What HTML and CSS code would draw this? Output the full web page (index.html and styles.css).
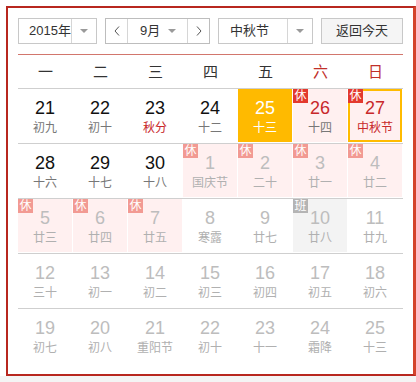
FILE: index.html
```html
<!DOCTYPE html>
<html lang="zh">
<head>
<meta charset="utf-8">
<title>万年历</title>
<link rel="stylesheet" href="styles.css">
</head>
<body>
<div class="cal">
  <div class="toolbar">
    <div class="select year"><span class="val">2015年</span><span class="arr"><i class="tri"></i></span></div>
    <div class="mgroup">
      <span class="nav"><svg width="6" height="10" viewBox="0 0 6 10"><polyline points="5,0.5 1,5 5,9.5" fill="none" stroke="#555" stroke-width="1"/></svg></span>
      <div class="mval"><span class="val">9月</span><i class="tri"></i></div>
      <span class="nav"><svg width="6" height="10" viewBox="0 0 6 10"><polyline points="1,0.5 5,5 1,9.5" fill="none" stroke="#555" stroke-width="1"/></svg></span>
    </div>
    <div class="select holiday"><span class="val">中秋节</span><span class="arr"><i class="tri"></i></span></div>
    <div class="today-btn">返回今天</div>
  </div>
  <div class="weekdays">
    <span>一</span><span>二</span><span>三</span><span>四</span><span>五</span><span class="we">六</span><span class="we">日</span>
  </div>
  <div class="rows">
    <div class="row">
      <div class="cell"><div class="day"><b>21</b><em>初九</em></div></div>
      <div class="cell"><div class="day"><b>22</b><em>初十</em></div></div>
      <div class="cell"><div class="day"><b>23</b><em class="red">秋分</em></div></div>
      <div class="cell"><div class="day"><b>24</b><em>十二</em></div></div>
      <div class="cell"><div class="day today"><b>25</b><em>十三</em></div></div>
      <div class="cell"><div class="day rest"><span class="badge">休</span><b class="red">26</b><em>十四</em></div></div>
      <div class="cell"><div class="day rest sel"><span class="badge">休</span><b class="red">27</b><em class="red">中秋节</em></div></div>
    </div>
    <div class="row">
      <div class="cell"><div class="day"><b>28</b><em>十六</em></div></div>
      <div class="cell"><div class="day"><b>29</b><em>十七</em></div></div>
      <div class="cell"><div class="day"><b>30</b><em>十八</em></div></div>
      <div class="cell"><div class="day other rest"><span class="badge">休</span><b>1</b><em>国庆节</em></div></div>
      <div class="cell"><div class="day other rest"><span class="badge">休</span><b>2</b><em>二十</em></div></div>
      <div class="cell"><div class="day other rest"><span class="badge">休</span><b>3</b><em>廿一</em></div></div>
      <div class="cell"><div class="day other rest"><span class="badge">休</span><b>4</b><em>廿二</em></div></div>
    </div>
    <div class="row">
      <div class="cell"><div class="day other rest"><span class="badge">休</span><b>5</b><em>廿三</em></div></div>
      <div class="cell"><div class="day other rest"><span class="badge">休</span><b>6</b><em>廿四</em></div></div>
      <div class="cell"><div class="day other rest"><span class="badge">休</span><b>7</b><em>廿五</em></div></div>
      <div class="cell"><div class="day other"><b>8</b><em>寒露</em></div></div>
      <div class="cell"><div class="day other"><b>9</b><em>廿七</em></div></div>
      <div class="cell"><div class="day other work"><span class="badge">班</span><b>10</b><em>廿八</em></div></div>
      <div class="cell"><div class="day other"><b>11</b><em>廿九</em></div></div>
    </div>
    <div class="row">
      <div class="cell"><div class="day other"><b>12</b><em>三十</em></div></div>
      <div class="cell"><div class="day other"><b>13</b><em>初一</em></div></div>
      <div class="cell"><div class="day other"><b>14</b><em>初二</em></div></div>
      <div class="cell"><div class="day other"><b>15</b><em>初三</em></div></div>
      <div class="cell"><div class="day other"><b>16</b><em>初四</em></div></div>
      <div class="cell"><div class="day other"><b>17</b><em>初五</em></div></div>
      <div class="cell"><div class="day other"><b>18</b><em>初六</em></div></div>
    </div>
    <div class="row">
      <div class="cell"><div class="day other"><b>19</b><em>初七</em></div></div>
      <div class="cell"><div class="day other"><b>20</b><em>初八</em></div></div>
      <div class="cell"><div class="day other"><b>21</b><em>重阳节</em></div></div>
      <div class="cell"><div class="day other"><b>22</b><em>初十</em></div></div>
      <div class="cell"><div class="day other"><b>23</b><em>十一</em></div></div>
      <div class="cell"><div class="day other"><b>24</b><em>霜降</em></div></div>
      <div class="cell"><div class="day other"><b>25</b><em>十三</em></div></div>
    </div>
  </div>
</div>
<div class="foot"></div>
</body>
</html>
```

FILE: styles.css
```css
html, body {
  margin: 0;
  padding: 0;
  background: #fff;
}
body {
  font-family: "Liberation Sans", "Noto Sans CJK SC", sans-serif;
  color: #333;
  width: 416px;
  height: 382px;
  overflow: hidden;
}
.cal {
  margin: 6px 0 0 6px;
  width: 385px;
  padding: 10px 10px 11px 10px;
  border: 2px solid #b8271f;
  border-right: 3px solid #d4432b;
  background: #fff;
}
.foot {
  height: 6px;
  background: #f4f4f4;
}
.toolbar {
  display: flex;
  justify-content: space-between;
  height: 26px;
  margin-bottom: 10px;
  font-size: 13px;
}
.select, .mgroup, .today-btn {
  box-sizing: border-box;
  height: 26px;
  border: 1px solid #c8c8c8;
  display: flex;
  align-items: stretch;
  background: #fff;
}
.select .val {
  flex: 1;
  line-height: 24px;
  padding-left: 10px;
}
.select .arr {
  width: 24px;
  border-left: 1px solid #d6d6d6;
  display: flex;
  align-items: center;
  justify-content: center;
}
.tri {
  display: block;
  width: 0;
  height: 0;
  border-left: 4px solid transparent;
  border-right: 4px solid transparent;
  border-top: 4px solid #9a9a9a;
}
.year { width: 79px; }
.holiday { width: 95px; }
.holiday .val { padding-left: 11px; }
.mgroup {
  width: 105px;
  border-color: #bdbdbd;
}
.nav {
  width: 21px;
  display: flex;
  align-items: center;
  justify-content: center;
}
.mval {
  flex: 1;
  border-left: 1px solid #d6d6d6;
  border-right: 1px solid #d6d6d6;
  display: flex;
  align-items: center;
  padding-left: 12px;
  padding-right: 11px;
  justify-content: space-between;
}
.mval .val { line-height: 24px; }
.today-btn {
  width: 82px;
  background: #f5f5f5;
  justify-content: center;
  line-height: 24px;
  font-size: 13px;
  color: #333;
}
.weekdays {
  border-top: 1px solid #d2766d;
  display: grid;
  grid-template-columns: repeat(7, 55px);
  height: 33px;
  line-height: 33px;
  font-size: 15px;
  text-align: center;
  color: #333;
}
.weekdays .we { color: #c0302a; }
.row {
  display: grid;
  grid-template-columns: repeat(7, 55px);
  border-top: 1px solid #cfcfcf;
  height: 54px;
}
.cell {
  height: 54px;
}
.day {
  position: relative;
  box-sizing: border-box;
  height: 53px;
  margin-right: 1px;
  padding-top: 8px;
  text-align: center;
}
.day b {
  display: block;
  font-weight: normal;
  font-size: 18px;
  line-height: 22px;
  color: #111;
}
.day em {
  display: block;
  font-style: normal;
  font-size: 12px;
  line-height: 18px;
  color: #777;
}
.day .red { color: #c8282a; }
.day.today { background: #ffba00; }
.day.today b, .day.today em { color: #fff; }
.day.rest { background: #fff0f0; }
.day.work { background: #f3f3f3; }
.day.sel { box-shadow: inset 0 0 0 2px #ffbb00; }
.badge {
  position: absolute;
  left: 0;
  top: 0;
  width: 15px;
  height: 14px;
  line-height: 14px;
  font-size: 12px;
  color: #fff;
  background: #e3392e;
  text-align: center;
}
.day.other b { color: #bdbdbd; }
.day.other em { color: #b0b0b0; }
.day.other .badge { background: #f29a93; }
.day.work .badge { background: #b4b4b4; }
```
